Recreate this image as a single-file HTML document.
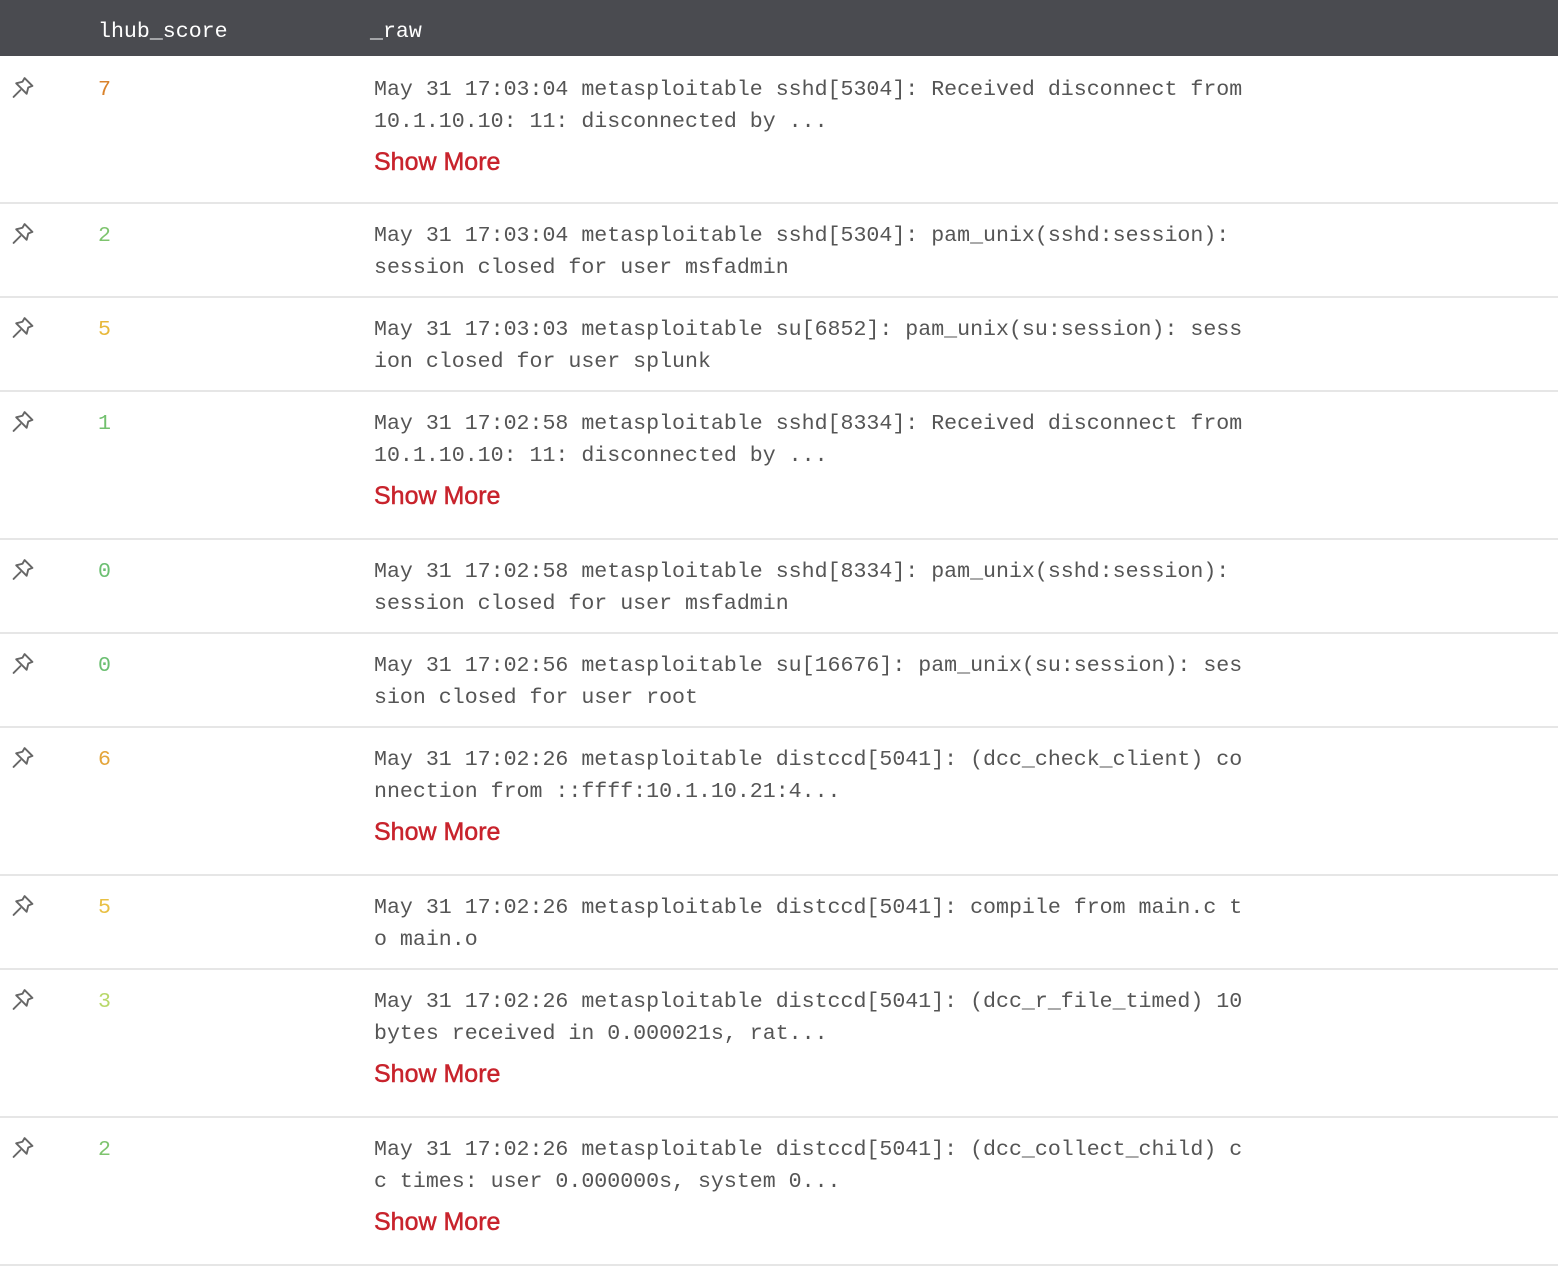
<!DOCTYPE html>
<html><head><meta charset="utf-8"><style>
body{margin:0;width:1558px;height:1270px;background:#fff;overflow:hidden;font-family:"Liberation Mono",monospace;}
.hdr{position:absolute;left:0;top:0;width:1558px;height:56px;background:#4a4b50;color:#fff;font-size:21.6px;}
.hdr span{position:absolute;top:0;line-height:64px;}
.row{position:absolute;left:0;width:1558px;border-bottom:2px solid #e6e6e6;box-sizing:border-box;}
.pin{position:absolute;left:12px;top:20px;width:22px;height:23px;}
.sc{position:absolute;left:98px;top:18px;font-size:21.6px;line-height:32px;}
.tx{position:absolute;left:374px;top:18px;font-size:21.6px;line-height:32px;color:#555;white-space:pre;}
.sm{position:absolute;left:374px;top:81px;font-family:"Liberation Sans",sans-serif;font-size:25px;line-height:50px;color:#c8232c;-webkit-text-stroke:0.5px #c8232c;}
</style></head><body>
<div class="hdr"><span style="left:98px">lhub_score</span><span style="left:370px">_raw</span></div>
<svg width="0" height="0" style="position:absolute"><defs><g id="p"><path d="M12 1.5L19.5 9L15.5 10.5L14 16.5L4 6.5L10 5Z" fill="none" stroke="#666" stroke-width="1.8" stroke-linejoin="round"/><path d="M8 13L1.5 19.5" stroke="#666" stroke-width="1.8" stroke-linecap="round"/></g></defs></svg>

<div class="row" style="top:56px;height:148px"><svg class="pin" viewBox="0 0 21 21"><use href="#p"/></svg><div class="sc" style="color:#d9822b">7</div><div class="tx">May 31 17:03:04 metasploitable sshd[5304]: Received disconnect from
10.1.10.10: 11: disconnected by ...</div><div class="sm">Show More</div></div>

<div class="row" style="top:202px;height:96px"><svg class="pin" viewBox="0 0 21 21"><use href="#p"/></svg><div class="sc" style="color:#7ec46e">2</div><div class="tx">May 31 17:03:04 metasploitable sshd[5304]: pam_unix(sshd:session):
session closed for user msfadmin</div></div>

<div class="row" style="top:296px;height:96px"><svg class="pin" viewBox="0 0 21 21"><use href="#p"/></svg><div class="sc" style="color:#e8b83a">5</div><div class="tx">May 31 17:03:03 metasploitable su[6852]: pam_unix(su:session): sess
ion closed for user splunk</div></div>

<div class="row" style="top:390px;height:150px"><svg class="pin" viewBox="0 0 21 21"><use href="#p"/></svg><div class="sc" style="color:#72c06e">1</div><div class="tx">May 31 17:02:58 metasploitable sshd[8334]: Received disconnect from
10.1.10.10: 11: disconnected by ...</div><div class="sm">Show More</div></div>

<div class="row" style="top:538px;height:96px"><svg class="pin" viewBox="0 0 21 21"><use href="#p"/></svg><div class="sc" style="color:#6cbf72">0</div><div class="tx">May 31 17:02:58 metasploitable sshd[8334]: pam_unix(sshd:session):
session closed for user msfadmin</div></div>

<div class="row" style="top:632px;height:96px"><svg class="pin" viewBox="0 0 21 21"><use href="#p"/></svg><div class="sc" style="color:#6cbf72">0</div><div class="tx">May 31 17:02:56 metasploitable su[16676]: pam_unix(su:session): ses
sion closed for user root</div></div>

<div class="row" style="top:726px;height:150px"><svg class="pin" viewBox="0 0 21 21"><use href="#p"/></svg><div class="sc" style="color:#e4a53a">6</div><div class="tx">May 31 17:02:26 metasploitable distccd[5041]: (dcc_check_client) co
nnection from ::ffff:10.1.10.21:4...</div><div class="sm">Show More</div></div>

<div class="row" style="top:874px;height:96px"><svg class="pin" viewBox="0 0 21 21"><use href="#p"/></svg><div class="sc" style="color:#e8c044">5</div><div class="tx">May 31 17:02:26 metasploitable distccd[5041]: compile from main.c t
o main.o</div></div>

<div class="row" style="top:968px;height:150px"><svg class="pin" viewBox="0 0 21 21"><use href="#p"/></svg><div class="sc" style="color:#b8d86a">3</div><div class="tx">May 31 17:02:26 metasploitable distccd[5041]: (dcc_r_file_timed) 10
bytes received in 0.000021s, rat...</div><div class="sm">Show More</div></div>

<div class="row" style="top:1116px;height:150px"><svg class="pin" viewBox="0 0 21 21"><use href="#p"/></svg><div class="sc" style="color:#7ec46e">2</div><div class="tx">May 31 17:02:26 metasploitable distccd[5041]: (dcc_collect_child) c
c times: user 0.000000s, system 0...</div><div class="sm">Show More</div></div>
</body></html>
